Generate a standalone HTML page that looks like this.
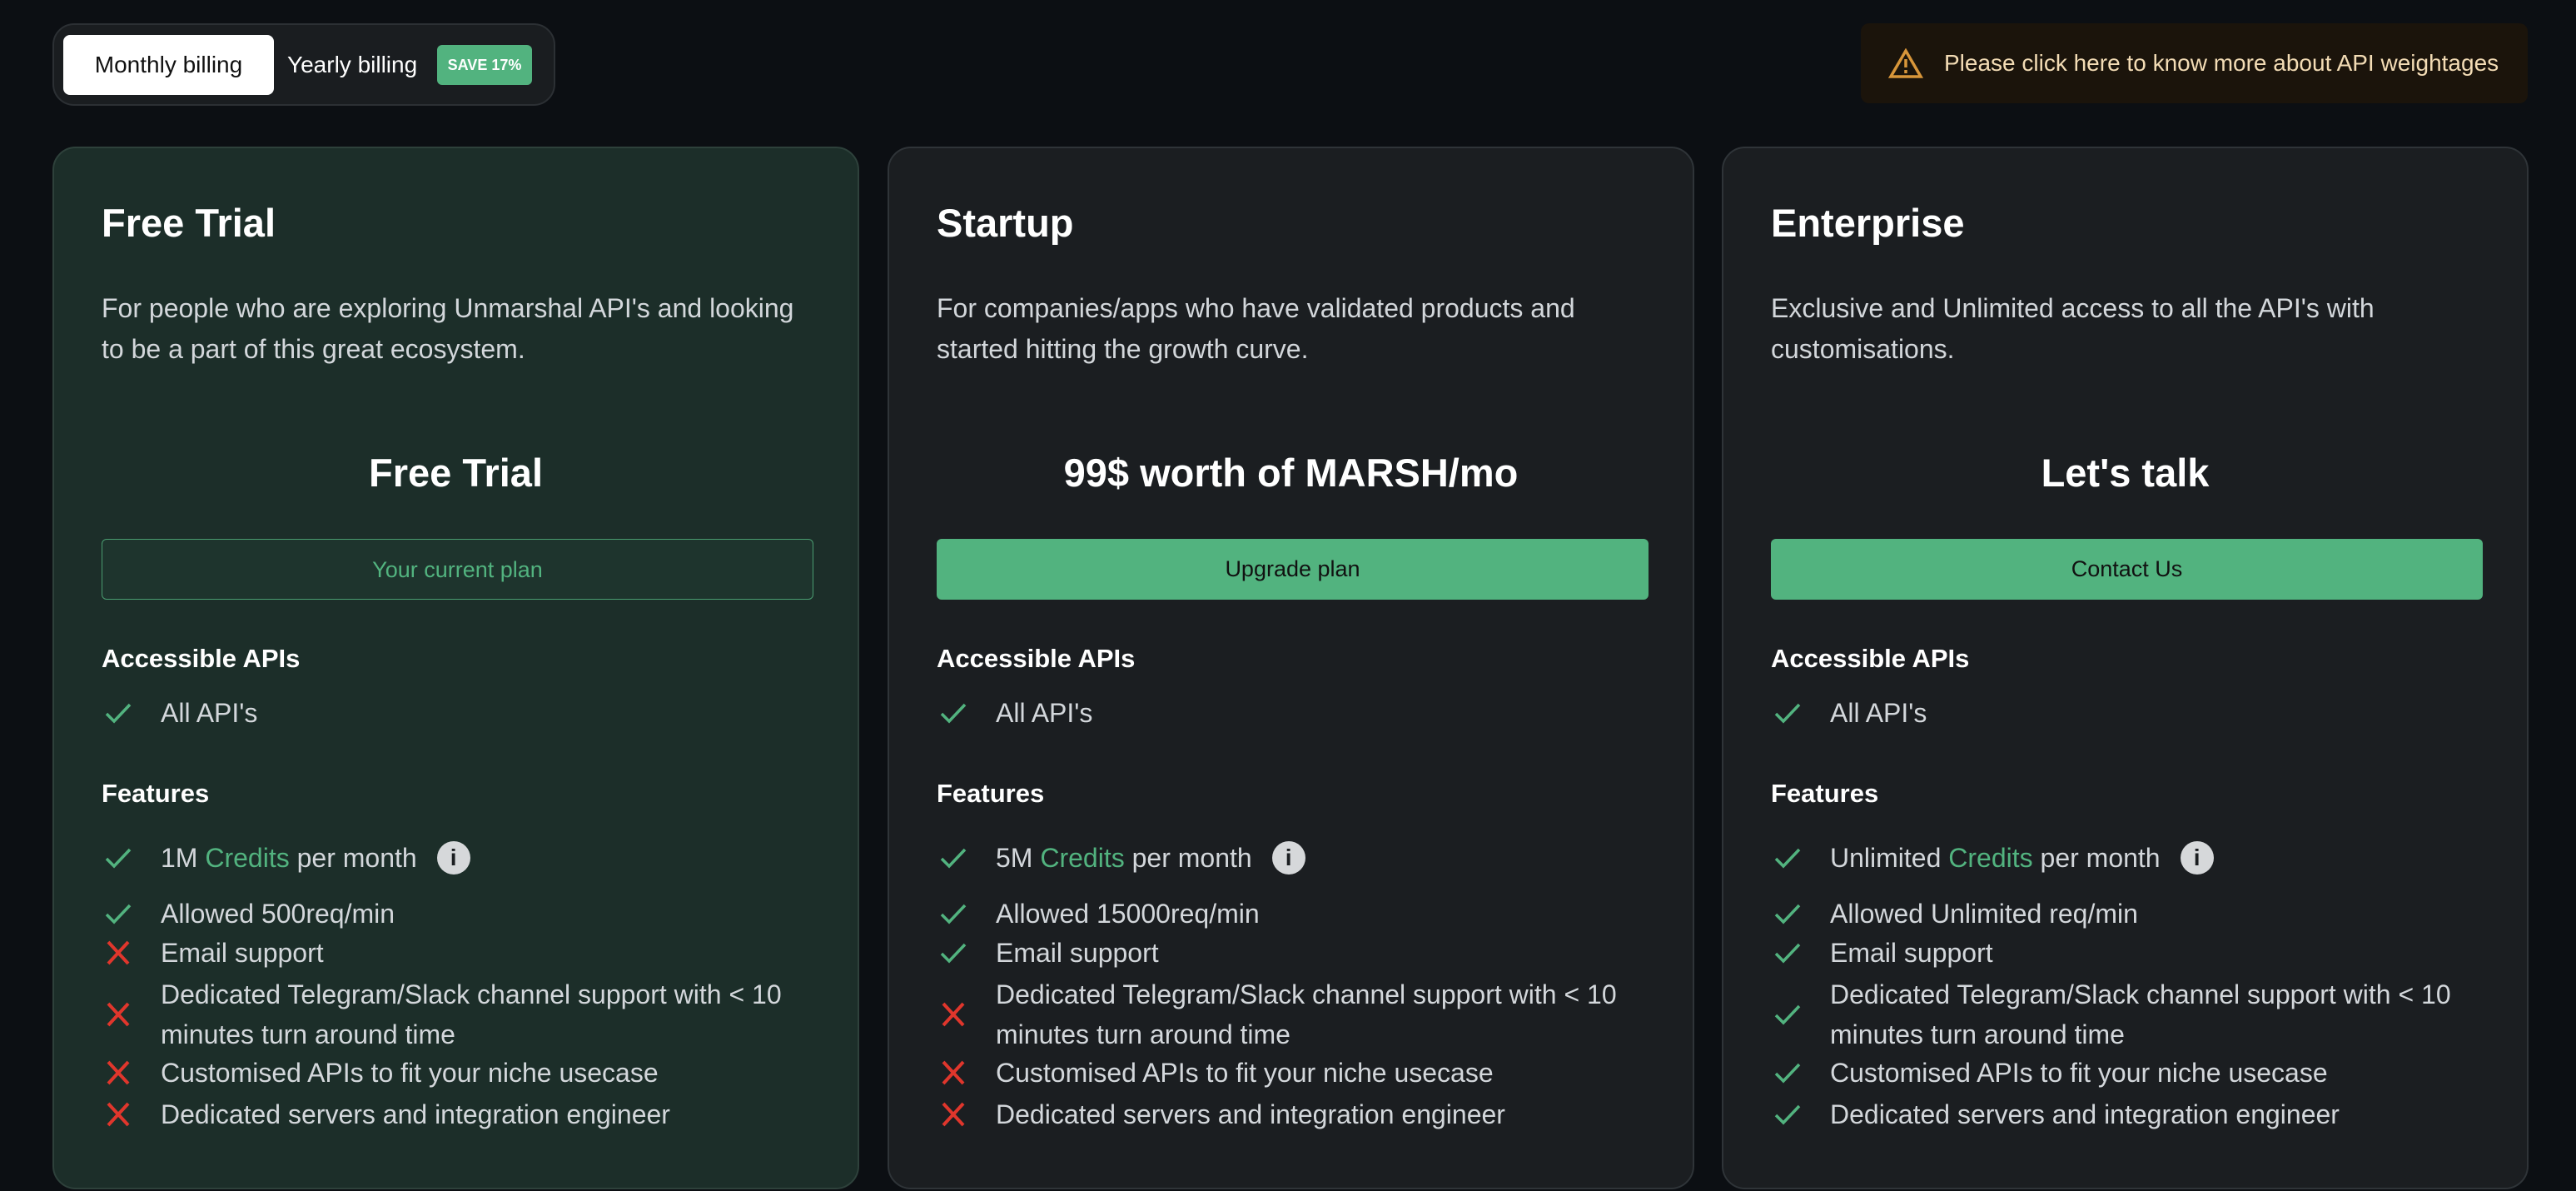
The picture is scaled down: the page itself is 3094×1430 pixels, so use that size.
<!DOCTYPE html>
<html><head><meta charset="utf-8">
<style>
*{margin:0;padding:0;box-sizing:border-box}
body{width:3094px;height:1430px;background:#0c0f13;font-family:"Liberation Sans",sans-serif;overflow:hidden;position:relative;color:#fff}
.toggle{position:absolute;left:63px;top:28px;width:604px;height:99px;border:2px solid #2c3034;border-radius:26px;background:#1a1d20}
.mon{position:absolute;left:11px;top:12px;width:253px;height:72px;background:#fff;border-radius:8px;color:#111;font-size:28px;line-height:72px;text-align:center}
.yr{position:absolute;left:280px;top:12px;line-height:72px;font-size:28px;color:#fff}
.badge{position:absolute;left:460px;top:24px;width:114px;height:48px;background:#52b37f;border-radius:6px;color:#fff;font-weight:bold;font-size:18px;line-height:48px;text-align:center}
.alert{position:absolute;left:2235px;top:28px;width:801px;height:96px;background:#1b140b;border-radius:10px}
.alert svg{position:absolute;left:33px;top:30px}
.alert span{position:absolute;left:100px;top:0;line-height:96px;font-size:28px;color:#f3dcb5}
.card{position:absolute;top:176px;width:969px;height:1252px;border-radius:28px;border:2px solid #2f3438;background:#1b1e21}
.card.g{background:#1c2e29;border-color:#2e413b}
.a{position:absolute;left:57px;white-space:nowrap}
.t{font-weight:bold;font-size:47px;line-height:60px}
.d{font-size:32px;color:#d3d7db;line-height:49px}
.p{left:0;right:0;text-align:center;font-weight:bold;font-size:47px;line-height:60px}
.btn{position:absolute;left:57px;width:855px;height:73px;top:469px;border-radius:6px;font-size:27px;line-height:73px;text-align:center}
.h{font-weight:bold;font-size:31px;line-height:48px}
.r{font-size:32px;color:#d3d7db;line-height:48px;left:128px}
.ic{position:absolute;left:61px}
.cr{color:#52b37f}
.info{display:inline-block;width:40px;height:40px;border-radius:50%;background:#d6d8da;color:#1b1e21;font-weight:bold;font-size:28px;line-height:40px;text-align:center;vertical-align:middle;margin-left:24px;margin-top:-6px}
</style></head><body>
<div class="toggle"><div class="mon">Monthly billing</div><div class="yr">Yearly billing</div><div class="badge">SAVE 17%</div></div>
<div class="alert"><svg width="42" height="36" viewBox="0 0 42 36"><path d="M21 3 L39 34 L3 34 Z" fill="none" stroke="#d8963a" stroke-width="3.5" stroke-linejoin="miter"/><line x1="21" y1="13" x2="21" y2="23" stroke="#d8963a" stroke-width="3.5"/><line x1="21" y1="26" x2="21" y2="30" stroke="#d8963a" stroke-width="3.5"/></svg><span>Please click here to know more about API weightages</span></div>

<div class="card g" style="left:63px">
 <div class="a t" style="top:60px">Free Trial</div>
 <div class="a d" style="top:168px">For people who are exploring Unmarshal API's and looking<br>to be a part of this great ecosystem.</div>
 <div class="a p" style="top:360px">Free Trial</div>
 <div class="btn" style="border:1.5px solid #4a9c70;color:#52b37f;background:#1e342d">Your current plan</div>
 <div class="a h" style="top:589px">Accessible APIs</div>
 <svg class="ic" style="top:664px" width="32" height="28" viewBox="0 0 32 28"><path d="M2 15 L11 24 L30 4" fill="none" stroke="#52b37f" stroke-width="3.5"/></svg>
 <div class="a r" style="top:654px">All API's</div>
 <div class="a h" style="top:751px">Features</div>
 <svg class="ic" style="top:838px" width="32" height="28" viewBox="0 0 32 28"><path d="M2 15 L11 24 L30 4" fill="none" stroke="#52b37f" stroke-width="3.5"/></svg>
 <div class="a r" style="top:828px">1M <span class="cr">Credits</span> per month<span class="info">i</span></div>
 <svg class="ic" style="top:905px" width="32" height="28" viewBox="0 0 32 28"><path d="M2 15 L11 24 L30 4" fill="none" stroke="#52b37f" stroke-width="3.5"/></svg>
 <div class="a r" style="top:895px">Allowed 500req/min</div>
 <svg class="ic" style="top:951px" width="32" height="30" viewBox="0 0 32 30"><path d="M4 2 L28 28 M28 2 L4 28" stroke="#e0362c" stroke-width="4"/></svg>
 <div class="a r" style="top:942px">Email support</div>
 <svg class="ic" style="top:1025px" width="32" height="30" viewBox="0 0 32 30"><path d="M4 2 L28 28 M28 2 L4 28" stroke="#e0362c" stroke-width="4"/></svg>
 <div class="a r" style="top:992px">Dedicated Telegram/Slack channel support with &lt; 10<br>minutes turn around time</div>
 <svg class="ic" style="top:1095px" width="32" height="30" viewBox="0 0 32 30"><path d="M4 2 L28 28 M28 2 L4 28" stroke="#e0362c" stroke-width="4"/></svg>
 <div class="a r" style="top:1086px">Customised APIs to fit your niche usecase</div>
 <svg class="ic" style="top:1145px" width="32" height="30" viewBox="0 0 32 30"><path d="M4 2 L28 28 M28 2 L4 28" stroke="#e0362c" stroke-width="4"/></svg>
 <div class="a r" style="top:1136px">Dedicated servers and integration engineer</div>
</div>

<div class="card" style="left:1066px">
 <div class="a t" style="top:60px">Startup</div>
 <div class="a d" style="top:168px">For companies/apps who have validated products and<br>started hitting the growth curve.</div>
 <div class="a p" style="top:360px">99$ worth of MARSH/mo</div>
 <div class="btn" style="background:#52b37f;color:#111">Upgrade plan</div>
 <div class="a h" style="top:589px">Accessible APIs</div>
 <svg class="ic" style="top:664px" width="32" height="28" viewBox="0 0 32 28"><path d="M2 15 L11 24 L30 4" fill="none" stroke="#52b37f" stroke-width="3.5"/></svg>
 <div class="a r" style="top:654px">All API's</div>
 <div class="a h" style="top:751px">Features</div>
 <svg class="ic" style="top:838px" width="32" height="28" viewBox="0 0 32 28"><path d="M2 15 L11 24 L30 4" fill="none" stroke="#52b37f" stroke-width="3.5"/></svg>
 <div class="a r" style="top:828px">5M <span class="cr">Credits</span> per month<span class="info">i</span></div>
 <svg class="ic" style="top:905px" width="32" height="28" viewBox="0 0 32 28"><path d="M2 15 L11 24 L30 4" fill="none" stroke="#52b37f" stroke-width="3.5"/></svg>
 <div class="a r" style="top:895px">Allowed 15000req/min</div>
 <svg class="ic" style="top:952px" width="32" height="28" viewBox="0 0 32 28"><path d="M2 15 L11 24 L30 4" fill="none" stroke="#52b37f" stroke-width="3.5"/></svg>
 <div class="a r" style="top:942px">Email support</div>
 <svg class="ic" style="top:1025px" width="32" height="30" viewBox="0 0 32 30"><path d="M4 2 L28 28 M28 2 L4 28" stroke="#e0362c" stroke-width="4"/></svg>
 <div class="a r" style="top:992px">Dedicated Telegram/Slack channel support with &lt; 10<br>minutes turn around time</div>
 <svg class="ic" style="top:1095px" width="32" height="30" viewBox="0 0 32 30"><path d="M4 2 L28 28 M28 2 L4 28" stroke="#e0362c" stroke-width="4"/></svg>
 <div class="a r" style="top:1086px">Customised APIs to fit your niche usecase</div>
 <svg class="ic" style="top:1145px" width="32" height="30" viewBox="0 0 32 30"><path d="M4 2 L28 28 M28 2 L4 28" stroke="#e0362c" stroke-width="4"/></svg>
 <div class="a r" style="top:1136px">Dedicated servers and integration engineer</div>
</div>

<div class="card" style="left:2068px">
 <div class="a t" style="top:60px">Enterprise</div>
 <div class="a d" style="top:168px">Exclusive and Unlimited access to all the API's with<br>customisations.</div>
 <div class="a p" style="top:360px">Let's talk</div>
 <div class="btn" style="background:#52b37f;color:#111">Contact Us</div>
 <div class="a h" style="top:589px">Accessible APIs</div>
 <svg class="ic" style="top:664px" width="32" height="28" viewBox="0 0 32 28"><path d="M2 15 L11 24 L30 4" fill="none" stroke="#52b37f" stroke-width="3.5"/></svg>
 <div class="a r" style="top:654px">All API's</div>
 <div class="a h" style="top:751px">Features</div>
 <svg class="ic" style="top:838px" width="32" height="28" viewBox="0 0 32 28"><path d="M2 15 L11 24 L30 4" fill="none" stroke="#52b37f" stroke-width="3.5"/></svg>
 <div class="a r" style="top:828px">Unlimited <span class="cr">Credits</span> per month<span class="info">i</span></div>
 <svg class="ic" style="top:905px" width="32" height="28" viewBox="0 0 32 28"><path d="M2 15 L11 24 L30 4" fill="none" stroke="#52b37f" stroke-width="3.5"/></svg>
 <div class="a r" style="top:895px">Allowed Unlimited req/min</div>
 <svg class="ic" style="top:952px" width="32" height="28" viewBox="0 0 32 28"><path d="M2 15 L11 24 L30 4" fill="none" stroke="#52b37f" stroke-width="3.5"/></svg>
 <div class="a r" style="top:942px">Email support</div>
 <svg class="ic" style="top:1026px" width="32" height="28" viewBox="0 0 32 28"><path d="M2 15 L11 24 L30 4" fill="none" stroke="#52b37f" stroke-width="3.5"/></svg>
 <div class="a r" style="top:992px">Dedicated Telegram/Slack channel support with &lt; 10<br>minutes turn around time</div>
 <svg class="ic" style="top:1096px" width="32" height="28" viewBox="0 0 32 28"><path d="M2 15 L11 24 L30 4" fill="none" stroke="#52b37f" stroke-width="3.5"/></svg>
 <div class="a r" style="top:1086px">Customised APIs to fit your niche usecase</div>
 <svg class="ic" style="top:1146px" width="32" height="28" viewBox="0 0 32 28"><path d="M2 15 L11 24 L30 4" fill="none" stroke="#52b37f" stroke-width="3.5"/></svg>
 <div class="a r" style="top:1136px">Dedicated servers and integration engineer</div>
</div>
</body></html>
